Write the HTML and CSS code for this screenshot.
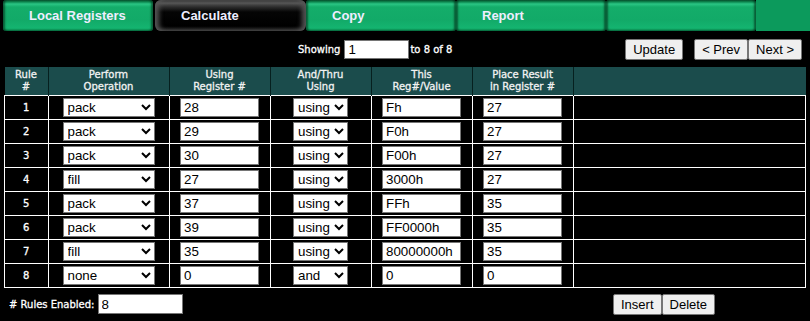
FILE: index.html
```html
<html>
    <head>
        <meta charset="UTF-8">
        <title>Calculate</title>
        <link rel="stylesheet" href="styles.css">
    </head>

    <body>
        <!-- Tab bar -->
        <div class="tabs">
            <div class="tab">Local Registers</div>
            <div class="tab active">Calculate</div>
            <div class="tab">Copy</div>
            <div class="tab">Report</div>
            <div class="tab"></div>
            <div class="tab-fill"></div>
        </div>

        <!-- Paging -->
        <div class="paging">
            <div class="showing">
                Showing <input type="text" class="show-input" value="1"> to 8 of 8
            </div>
            <div class="page-btns">
                <button class="btn">Update</button>
                <div class="nav-btns">
                    <button class="btn">&lt; Prev</button><button class="btn">Next &gt;</button>
                </div>
            </div>
        </div>

        <!-- Rules table -->
        <table class="rules">
            <thead>
                <tr>
                    <th class="c-rule">Rule<br>#</th>
                    <th class="c-op">Perform<br>Operation</th>
                    <th class="c-reg">Using<br>Register #</th>
                    <th class="c-and">And/Thru<br>Using</th>
                    <th class="c-val">This<br>Reg#/Value</th>
                    <th class="c-res">Place Result<br>in Register #</th>
                    <th class="c-rest"></th>
                </tr>
            </thead>
            <tbody id="rows"></tbody>
        </table>

        <!-- Footer -->
        <div class="footer">
            <div class="enabled">
                # Rules Enabled: <input type="text" class="enabled-input" value="8">
            </div>
            <div class="edit-btns">
                <button class="btn">Insert</button><button class="btn">Delete</button>
            </div>
        </div>

        <script>
        const rules = [
            ['pack', '28', 'using', 'Fh', '27'],
            ['pack', '29', 'using', 'F0h', '27'],
            ['pack', '30', 'using', 'F00h', '27'],
            ['fill', '27', 'using', '3000h', '27'],
            ['pack', '37', 'using', 'FFh', '35'],
            ['pack', '39', 'using', 'FF0000h', '35'],
            ['fill', '35', 'using', '80000000h', '35'],
            ['none', '0', 'and', '0', '0']
        ];

        // build each rule row
        var tbody = document.getElementById('rows');
        rules.forEach((r, i) => {
            var tr = document.createElement('TR');
            tr.innerHTML = `
                <td class="num">${i + 1}</td>
                <td><select class="op-sel"><option>${r[0]}</option></select></td>
                <td><input type="text" class="cell-input" value="${r[1]}"></td>
                <td><select class="and-sel"><option>${r[2]}</option></select></td>
                <td><input type="text" class="cell-input" value="${r[3]}"></td>
                <td><input type="text" class="cell-input" value="${r[4]}"></td>
                <td></td>
            `;
            tbody.appendChild(tr);
        });
        </script>
    </body>
</html>
```

FILE: styles.css
```css
body, html{
    margin: 0;
}

body{
    background-color: #000;
    color: #fff;
    font-family: "DejaVu Sans", Verdana, sans-serif;
    width: 810px;
    height: 321px;
    overflow: hidden;
}

/* Tabs */
.tabs{
    display: flex;
    height: 31px;
    padding-left: 3px;
}

.tab{
    width: 150px;
    height: 31px;
    box-sizing: border-box;
    padding-left: 26px;
    line-height: 32px;
    font-family: "Liberation Sans", Arial, sans-serif;
    font-weight: bold;
    font-size: 13px;
    color: #eef;
    border-radius: 3px;
    background: linear-gradient(#0b6b3f 0px, #0e8a52 2px, #2ac684 4px, #14ad6a 7px, #12aa68 20px, #14b470 28px, #0a8c52 31px);
    box-shadow: inset 2px 0 2px rgba(0, 40, 20, 0.6), inset -2px 0 2px rgba(0, 40, 20, 0.6);
}

.tab.active{
    width: 151px;
    margin-left: 2px;
    background: linear-gradient(#1a1a1a 0px, #5a5a5a 3px, #2c2c2c 7px, #050505 12px, #000 26px, #111 31px);
    box-shadow: inset 4px 0 5px #555, inset -4px 0 5px #555;
    border-radius: 6px;
}

.tab-fill{
    flex: 1;
    height: 31px;
    background-color: #0c9a5c;
}

/* Paging */
.paging{
    display: flex;
    justify-content: space-between;
    align-items: center;
    height: 36px;
    padding-left: 298px;
    padding-right: 8px;
}

.showing, .enabled{
    font-size: 10px;
    -webkit-text-stroke: 0.3px #fff;
    display: flex;
    align-items: center;
}

.show-input{
    width: 65px;
    height: 19px;
    margin: 0 1px 0 4px;
}

.page-btns{
    display: flex;
    align-items: center;
    gap: 11px;
    margin-top: 1px;
}

.nav-btns{
    display: flex;
}

.btn{
    font-family: "Liberation Sans", Arial, sans-serif;
    font-size: 13px;
    height: 21px;
    padding: 0 7px;
    color: #000;
    background-color: #efefef;
    border: 1px solid #767676;
    border-radius: 2px;
}

input{
    box-sizing: border-box;
    font-family: "Liberation Sans", Arial, sans-serif;
    font-size: 13.33px;
    color: #000;
    -webkit-text-stroke: 0;
    background-color: #fff;
    border: 1px solid #767676;
    padding: 0 3px;
}

select{
    box-sizing: border-box;
    font-family: "Liberation Sans", Arial, sans-serif;
    font-size: 13.33px;
    color: #000;
    background-color: #fff;
    border: 1px solid #767676;
    height: 19px;
    padding: 0;
}

/* Table */
.rules{
    margin-left: 4px;
    width: 802px;
    border-collapse: collapse;
}

.rules th{
    height: 28px;
    background-color: #1b4c4c;
    border-left: 1px solid #06201f;
    font-size: 10px;
    font-weight: normal;
    -webkit-text-stroke: 0.3px #f2f2f2;
    line-height: 12px;
    color: #f2f2f2;
    padding: 0;
}

.rules th:first-child{
    border-left: none;
}

.rules td{
    height: 24px;
    border: 1px solid #fff;
    text-align: center;
    padding: 0;
}

.rules td.num{
    font-size: 10px;
    -webkit-text-stroke: 0.3px #fff;
}

.c-rule{ width: 43px; }
.c-op{ width: 120px; }
.c-reg{ width: 100px; }
.c-and{ width: 100px; }
.c-val{ width: 100px; }
.c-res{ width: 100px; }

.op-sel{
    width: 92px;
}

.and-sel{
    width: 55px;
}

.cell-input{
    width: 79px;
    height: 19px;
}

/* Footer */
.footer{
    display: flex;
    align-items: center;
    padding-top: 6px;
    padding-left: 9px;
}

.enabled{
    width: 604px;
}

.enabled-input{
    width: 85px;
    height: 20px;
    margin-left: 3px;
}

.edit-btns{
    display: flex;
}
```
